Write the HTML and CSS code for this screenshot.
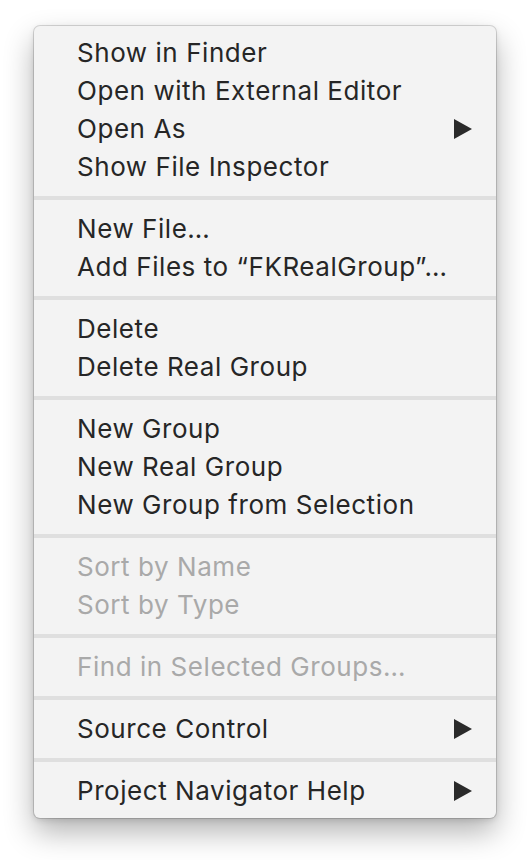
FILE: index.html
```html
<!DOCTYPE html>
<html>
<head>
<meta charset="utf-8">
<link rel="stylesheet" href="styles.css">
</head>
<body>
<div class="menu">
  <div class="item">Show in Finder</div>
  <div class="item">Open with External Editor</div>
  <div class="item">Open As<span class="arrow"></span></div>
  <div class="item">Show File Inspector</div>
  <div class="sep"></div>
  <div class="item">New File…</div>
  <div class="item">Add Files to “FKRealGroup”…</div>
  <div class="sep"></div>
  <div class="item">Delete</div>
  <div class="item">Delete Real Group</div>
  <div class="sep"></div>
  <div class="item">New Group</div>
  <div class="item">New Real Group</div>
  <div class="item">New Group from Selection</div>
  <div class="sep"></div>
  <div class="item disabled">Sort by Name</div>
  <div class="item disabled">Sort by Type</div>
  <div class="sep"></div>
  <div class="item disabled">Find in Selected Groups…</div>
  <div class="sep"></div>
  <div class="item">Source Control<span class="arrow"></span></div>
  <div class="sep"></div>
  <div class="item">Project Navigator Help<span class="arrow"></span></div>
</div>
</body>
</html>
```
FILE: styles.css
```css
html, body {
  margin: 0;
  padding: 0;
  background: #ffffff;
}
body {
  min-height: 860px;
  box-sizing: border-box;
  padding: 26px 0 0 34px;
  font-family: "Inter", "Roboto", "Liberation Sans", sans-serif;
}
.menu {
  width: 462px;
  box-sizing: border-box;
  background: #f3f3f3;
  border-radius: 6px;
  padding: 8px 0;
  box-shadow: 0 0 0 1px rgba(0,0,0,0.14), 0 14px 30px rgba(0,0,0,0.3), 0 2px 6px rgba(0,0,0,0.12);
}
.item {
  height: 38px;
  box-sizing: border-box;
  padding: 0 24px 2px 43px;
  display: flex;
  align-items: center;
  justify-content: space-between;
  font-size: 26px;
  color: #262626;
  letter-spacing: 0.55px;
}
.item.disabled {
  color: #a9a9a9;
}
.sep {
  height: 4px;
  margin: 10px 0;
  background: #dfdfdf;
}
.arrow {
  width: 0;
  height: 0;
  margin-top: 2px;
  border-top: 10px solid transparent;
  border-bottom: 10px solid transparent;
  border-left: 18px solid #2a2a2a;
}
```
